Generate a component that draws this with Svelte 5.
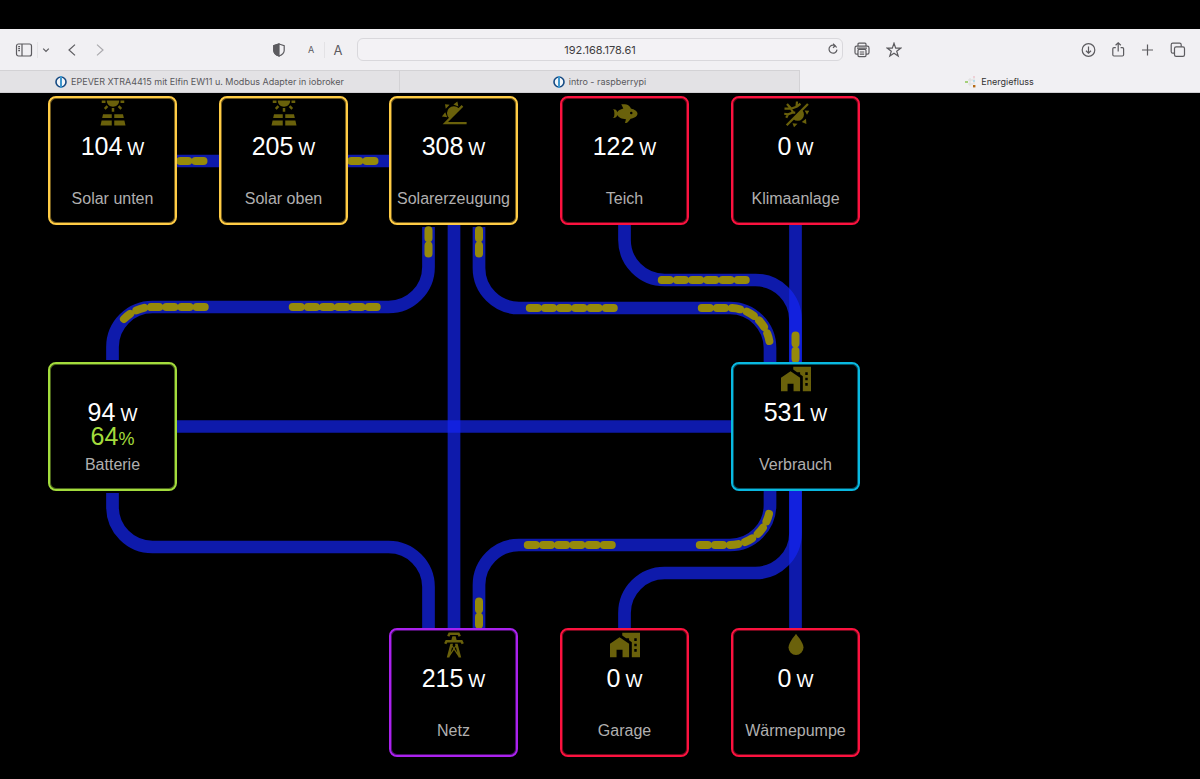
<script>
  let address = '192.168.178.61';

  const tabs = [
    { title: 'EPEVER XTRA4415 mit Elfin EW11 u. Modbus Adapter in iobroker', icon: 'iobroker' },
    { title: 'intro - raspberrypi', icon: 'iobroker' },
    { title: 'Energiefluss', icon: 'flow', active: true }
  ];

  const yellow = '#ffcc45';
  const red = '#fb123f';

  const nodes = [
    { name: 'Solar unten', value: 104, icon: 'solar', color: yellow, x: 48, y: 3 },
    { name: 'Solar oben', value: 205, icon: 'solar', color: yellow, x: 219, y: 3 },
    { name: 'Solarerzeugung', value: 308, icon: 'angle', color: yellow, x: 389, y: 3 },
    { name: 'Teich', value: 122, icon: 'fish', color: red, x: 560, y: 3 },
    { name: 'Klimaanlage', value: 0, icon: 'climate', color: red, x: 731, y: 3 },
    { name: 'Batterie', value: 94, percent: 64, color: '#a3dc3c', x: 48, y: 269 },
    { name: 'Verbrauch', value: 531, icon: 'home', color: '#09b8e0', x: 731, y: 269 },
    { name: 'Netz', value: 215, icon: 'tower', color: '#aa22ee', x: 389, y: 535 },
    { name: 'Garage', value: 0, icon: 'home', color: red, x: 560, y: 535 },
    { name: 'Wärmepumpe', value: 0, icon: 'drop', color: red, x: 731, y: 535 }
  ];

  // each path starts at the node that delivers the power
  const lines = [
    { d: 'M177 68H219', active: true },
    { d: 'M348 68H389', active: true },
    { d: 'M428.5 134V174A40 40 0 0 1 388.5 214H152.5A40 40 0 0 0 112.5 254V267', active: true },
    { d: 'M479 134V175A40 40 0 0 0 519 215H730A40 40 0 0 1 770 255V269', active: true },
    { d: 'M795.5 269V227A40 40 0 0 0 755.5 187H664.5A40 40 0 0 1 624.5 147V132', active: true },
    { d: 'M479 535V492A40 40 0 0 1 519 452H730A40 40 0 0 0 770 412V397', active: true },
    { d: 'M795.5 132V269' },
    { d: 'M454 132V535' },
    { d: 'M177 333.5H731' },
    { d: 'M112.5 400V414A40 40 0 0 0 152.5 454H388.5A40 40 0 0 1 428.5 494V535' },
    { d: 'M795.5 398V440A40 40 0 0 1 755.5 480H664.5A40 40 0 0 0 624.5 520V535' },
    { d: 'M795.5 398V535' }
  ];
</script>

<div class="screen">
  <header>
    <div class="toolbar">
      <div class="side">
        <div class="group">
          <button aria-label="Seitenleiste">
            <svg width="18" height="14" viewBox="0 0 18 14"><rect x="1.5" y="1" width="15" height="12" rx="2" /><path d="M7 1V13M3.2 3.6H5M3.2 5.6H5M3.2 7.6H5" /></svg>
          </button>
          <i></i>
          <button class="narrow" aria-label="Tabgruppen">
            <svg width="8" height="8" viewBox="0 0 8 8"><path d="M1.2 2.6 4 5.4 6.8 2.6" /></svg>
          </button>
        </div>
        <div class="group nav">
          <button aria-label="Zurück">
            <svg width="10" height="14" viewBox="0 0 10 14"><path d="M8 1.6 2 7 8 12.4" /></svg>
          </button>
          <button class="off" aria-label="Vorwärts">
            <svg width="10" height="14" viewBox="0 0 10 14"><path d="M2 1.6 8 7 2 12.4" /></svg>
          </button>
        </div>
        <div class="group end">
          <button class="shield" aria-label="Datenschutzbericht">
            <svg width="14" height="14" viewBox="0 0 14 14"><path d="M7 1 12.2 2.6V7.4C12.2 10 10 11.8 7 13 4 11.8 1.8 10 1.8 7.4V2.6Z" /><path class="solid" d="M7 1V13C4 11.8 1.8 10 1.8 7.4V2.6Z" /></svg>
          </button>
          <button class="small" aria-label="Schrift verkleinern">A</button>
          <i></i>
          <button class="large" aria-label="Schrift vergrößern">A</button>
        </div>
      </div>

      <div class="address">
        <input type="text" aria-label="Adresse" bind:value={address} />
        <button aria-label="Neu laden">
          <svg width="12" height="12" viewBox="0 0 12 12"><path d="M9.6 4.4A4 4 0 1 0 10 6.6M6 .8 8.2 2.8 6 4.8" /></svg>
        </button>
      </div>

      <div class="side">
        <div class="group start">
          <button aria-label="Drucken">
            <svg width="16" height="16" viewBox="0 0 16 16"><path d="M4 4V2.3Q4 1.2 5 1.2H11Q12 1.2 12 2.3V4M4 12.2H2.6Q1 12.2 1 10.6V6Q1 4.2 2.6 4.2H13.4Q15 4.2 15 6V10.6Q15 12.2 13.4 12.2H12M3 6.2H13" /><rect x="4" y="7.4" width="8" height="7.2" rx="1" /><path d="M5.8 10H10.2M5.8 12.2H10.2" /></svg>
          </button>
          <button aria-label="Lesezeichen">
            <svg width="16" height="16" viewBox="0 0 16 16"><path d="M8 1.2 9.7 6.1H14.8L10.7 9.2 12.2 14.1 8 11.2 3.8 14.1 5.3 9.2 1.2 6.1H6.3Z" /></svg>
          </button>
        </div>
        <div class="group end tools">
          <button aria-label="Downloads">
            <svg width="16" height="16" viewBox="0 0 16 16"><circle cx="8.5" cy="8" r="6.3" /><path d="M8.5 4.5V11M6 8.8 8.5 11.2 11 8.8" /></svg>
          </button>
          <button aria-label="Teilen">
            <svg width="16" height="16" viewBox="0 0 16 16"><path d="M5.8 5.6H4Q2.8 5.6 2.8 6.8V12.8Q2.8 14 4 14H12.4Q13.6 14 13.6 12.8V6.8Q13.6 5.6 12.4 5.6H10.6M8.2 9.6V.8M5.6 3.2 8.2.8 10.8 3.2" /></svg>
          </button>
          <button aria-label="Neuer Tab">
            <svg width="16" height="16" viewBox="0 0 16 16"><path d="M7.5 2.5V13.5M2 8H13" /></svg>
          </button>
          <button aria-label="Tabübersicht">
            <svg width="16" height="16" viewBox="0 0 16 16"><rect x="4.5" y="4.8" width="10" height="9.6" rx="1.6" /><path d="M4.5 11.2H2.8Q1.2 11.2 1.2 9.6V2.8Q1.2 1.2 2.8 1.2H9.6Q11.2 1.2 11.2 2.8V4.8" /></svg>
          </button>
        </div>
      </div>
    </div>

    <nav class="tabs">
      {#each tabs as tab}
        <a href="#tab" class:active={tab.active}>
          {#if tab.icon === 'iobroker'}
            <svg width="12" height="12" viewBox="0 0 12 12"><circle cx="6" cy="6" r="5" fill="#f3f6f9" stroke="#164a83" stroke-width="1.6" /><rect x="5" y="0" width="2" height="12" fill="#3f96cd" /></svg>
          {:else}
            <svg width="12" height="12" viewBox="0 0 12 12"><path d="M3 4H8M3 8H8M5 2V10M9 1V8" stroke="#dddddc" stroke-width="1" /><path d="M0 6H3" stroke="#a5d07a" stroke-width="2" /><path d="M8 1H10" stroke="#eed0d6" stroke-width="2" /><path d="M8 5H10" stroke="#b5dbe8" stroke-width="2" /><rect x="8" y="9" width="2.4" height="2.4" fill="#b56a14" /></svg>
          {/if}
          <span>{tab.title}</span>
        </a>
      {/each}
    </nav>
  </header>

  <main>
    <svg class="lines" width="860" height="666" viewBox="0 0 860 666">
      {#each lines as line}
        <path class="line" d={line.d} />
      {/each}
      {#each lines.filter((line) => line.active) as line}
        <path class="flow" d={line.d} />
      {/each}
    </svg>

    {#each nodes as node}
      <section class="node" style="left: {node.x}px; top: {node.y}px; --color: {node.color}">
        <div class="icon">
          {#if node.icon === 'solar'}
            <svg viewBox="0 0 24 24"><path d="M3.33 16H11V13H4L3.33 16M13 16H20.67L20 13H13V16M21.11 18H13V22H22L21.11 18M2 22H11V18H2.89L2 22M11 8H13V11H11V8M15.76 7.21L17.18 5.79L19.3 7.91L17.89 9.33L15.76 7.21M4.71 7.91L6.83 5.79L8.24 7.21L6.12 9.33L4.71 7.91M3 2H6V4H3V2M18 2H21V4H18V2M12 7C14.76 7 17 4.76 17 2H7C7 4.76 9.24 7 12 7Z" /></svg>
          {:else if node.icon === 'angle'}
            <svg viewBox="0 0 24 24"><path d="M2.9 21 18.1 5.6 19.4 6.9 7.2 19.2H22.1V21ZM8 16A4.9 4.9 0 1 1 15.8 8.2ZM11.5 5.2 14.7 2.8 15.5 6.7ZM4.8 4.9 8.5 5.4 5.4 8.5ZM2.3 14.7 5 11.4 6.6 15.3Z" /></svg>
          {:else if node.icon === 'fish'}
            <svg viewBox="0 0 24 24"><path d="M12 20L12.76 17C9.5 16.79 6.59 15.4 5.75 13.58C5.66 14.06 5.53 14.5 5.33 14.83C4.67 16 3.33 16 2 16C3.1 16 3.5 14.43 3.5 12.5C3.5 10.57 3.1 9 2 9C3.33 9 4.67 9 5.33 10.17C5.53 10.5 5.66 10.94 5.75 11.42C6.4 10 8.32 8.85 10.66 8.32L9 5C11 5 13 5 14.33 5.67C15.46 6.23 16.11 7.27 16.69 8.38C19.61 9.08 22 10.66 22 12.5C22 14.38 19.5 16 16.5 16.66C15.67 17.76 14.86 18.78 14.17 19.33C13.33 20 12.67 20 12 20M17 11A1 1 0 0 0 16 12A1 1 0 0 0 17 13A1 1 0 0 0 18 12A1 1 0 0 0 17 11Z" /></svg>
          {:else if node.icon === 'climate'}
            <svg viewBox="0 0 24 24"><path d="M3.9 21.1 20.9 4.1 22.2 5.4 5.2 22.4ZM16.9 9.6A4.8 4.8 0 1 1 9.8 16.7ZM18.9 10 22.6 10.2 20.8 13.4ZM16.6 19.2 20 16.6 20.3 20.7ZM9.2 20.2 13.2 20.6 10.4 23.4Z" /><path class="flake" d="M9.6 11.6 8 8.4 4.8 4.8M2.8 8.4H8M9.6 11.6 5.6 13 2.6 12.6M5.6 13 4.2 15.8M8 8.6 12.4 7 12.8 2.8M12.4 7 15.6 4.6M9.6 11.6H11.4" /></svg>
          {:else if node.icon === 'home'}
            <svg viewBox="1 1 22 22"><path fill-rule="evenodd" d="M1 11V21H5.8V15.4H10.2V21H15V11L8 6.4ZM10 3V4.97L12.8 7H15V8.55L17 9.97V21H23V3ZM18.8 7H20.6V9H18.8ZM18.8 11H20.6V13H18.8ZM18.8 15H20.6V17H18.8Z" /></svg>
          {:else if node.icon === 'tower'}
            <svg viewBox="0 0 24 24"><path d="M8.28 5.45L6.5 4.55L7.76 2H16.23L17.5 4.55L15.72 5.44L15 4H9L8.28 5.45M18.62 8H14.09L13.3 5H10.7L9.91 8H5.38L4.1 10.55L5.89 11.44L6.62 10H17.38L18.1 11.45L19.89 10.56L18.62 8M17.77 22H15.7L15.46 21.1L12 15.9L8.53 21.1L8.3 22H6.23L9.12 11H11.19L10.83 12.35L12 14.1L13.16 12.35L12.81 11H14.88L17.77 22M11.4 15L10.5 13.65L9.32 18.13L11.4 15M14.68 18.12L13.5 13.64L12.6 15L14.68 18.12Z" /></svg>
          {:else if node.icon === 'drop'}
            <svg viewBox="0 0 24 24"><path d="M12 20A6 6 0 0 1 6 14C6 10 12 3.25 12 3.25C12 3.25 18 10 18 14A6 6 0 0 1 12 20Z" /></svg>
          {/if}
        </div>
        <p>{node.value}<small class="watt">W</small></p>
        <p class="percent">{#if node.percent}{node.percent}<small>%</small>{/if}</p>
        <h2>{node.name}</h2>
      </section>
    {/each}
  </main>
</div>

<style>
  :global(body) {
    background: #000;
  }

  .screen {
    padding-top: 29px;
    font-family: Inter, sans-serif;
  }

  header {
    background: #f1f0f3;
    border-bottom: 1px solid #cfced2;
  }

  .toolbar {
    display: grid;
    grid-template-columns: 1fr minmax(0, 486px) 1fr;
    align-items: center;
    height: 41px;
  }

  .side,
  .group {
    display: flex;
    align-items: center;
  }

  .group i {
    width: 1px;
    height: 16px;
    margin: 0 3px;
    background: #e3e2e5;
  }

  .group:first-child {
    padding-left: 14px;
  }

  .group.nav {
    gap: 8px;
    padding-left: 11px;
  }

  .group.start {
    gap: 12px;
    padding-left: 9px;
  }

  .group.end {
    margin-left: auto;
    padding-right: 9px;
  }

  .group.tools {
    gap: 10px;
    padding-right: 12px;
  }

  button {
    display: flex;
    align-items: center;
    justify-content: center;
    width: 20px;
    height: 20px;
    padding: 0;
    border: none;
    background: none;
    color: #5c5b5f;
    font-family: inherit;
    cursor: pointer;
  }

  button svg {
    flex: none;
    fill: none;
    stroke: currentColor;
    stroke-width: 1.2;
  }

  button .solid {
    fill: currentColor;
  }

  .narrow {
    width: 10px;
  }

  .off {
    color: #aaa9ad;
  }

  .shield {
    margin-right: 12px;
  }

  .small {
    font-size: 9px;
  }

  .large {
    font-size: 13px;
  }

  .address {
    position: relative;
  }

  .address input {
    box-sizing: border-box;
    display: block;
    width: 100%;
    height: 23px;
    padding: 0 24px;
    border: 1px solid #d9d8dc;
    border-radius: 6px;
    background: #f3f2f5;
    color: #3e3d40;
    font-family: inherit;
    font-size: 11px;
    text-align: center;
  }

  .address button {
    position: absolute;
    top: 1px;
    right: 0;
  }

  .tabs {
    display: flex;
  }

  .tabs a {
    box-sizing: border-box;
    flex: 1;
    display: flex;
    align-items: center;
    justify-content: center;
    gap: 4px;
    height: 22px;
    border-top: 1px solid #d3d2d5;
    border-right: 1px solid #d3d2d5;
    background: #e3e2e5;
    color: #59585c;
    font-size: 9px;
    text-decoration: none;
    white-space: nowrap;
  }

  .tabs a.active {
    border-color: #f1f0f3;
    background: #f1f0f3;
    color: #333;
  }

  main {
    position: relative;
    font-family: "Liberation Sans", Arial, sans-serif;
  }

  .lines {
    display: block;
    fill: none;
  }

  .line {
    stroke: #1425f3;
    stroke-opacity: 0.7;
    stroke-width: 12.7;
  }

  .flow {
    stroke: #968a0a;
    stroke-width: 8;
    stroke-linecap: round;
    stroke-dasharray: 8 7.2 8 7.2 8 7.2 8 7.2 8 7.2 8 88;
    stroke-dashoffset: 57.5;
  }

  .node {
    position: absolute;
    box-sizing: border-box;
    display: flex;
    flex-direction: column;
    align-items: center;
    width: 129px;
    height: 129px;
    border: 2px solid var(--color);
    border-radius: 8px;
    box-shadow: inset 0 0 0 1px color-mix(in srgb, var(--color) 45%, transparent);
    background: #000;
  }

  .icon {
    height: 36px;
  }

  .icon svg {
    display: block;
    width: 30px;
    height: 30px;
    fill: #6a610b;
    overflow: visible;
  }

  .icon .flake {
    fill: none;
    stroke: #6a610b;
    stroke-width: 1.8;
  }

  p,
  h2 {
    margin: 0;
    height: 24px;
    line-height: 24px;
    white-space: nowrap;
  }

  p {
    color: #fff;
    font-size: 25px;
  }

  small {
    font-size: 18px;
  }

  .watt {
    margin-left: 5px;
  }

  .percent {
    color: #a3dc3c;
  }

  h2 {
    padding-top: 5px;
    color: #b0afaf;
    font-size: 16px;
    font-weight: normal;
  }
</style>
